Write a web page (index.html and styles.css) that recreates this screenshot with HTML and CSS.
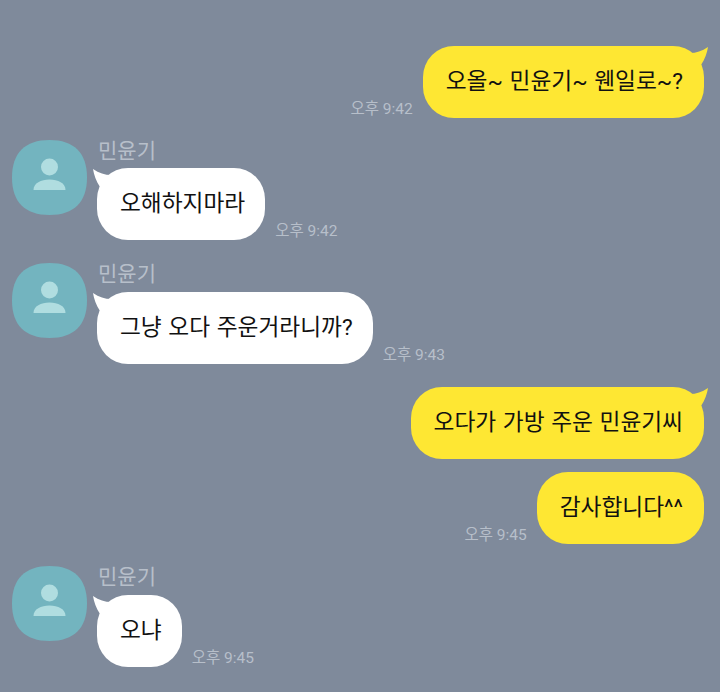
FILE: index.html
```html
<!DOCTYPE html>
<html lang="ko">
<head>
<meta charset="utf-8">
<title>채팅</title>
<link rel="stylesheet" href="styles.css">
</head>
<body>
<main class="chat">
  <div class="row me gap-22">
    <span class="time">오후 9:42</span>
    <div class="bubble yellow">오올~ 민윤기~ 웬일로~?
      <svg class="tail tail-me" viewBox="0 0 18 18"><path d="M0 6C6 6 12 4 18 0C17 6 15 12 11 18L0 18Z"/></svg>
    </div>
  </div>
  <div class="row them gap-23">
    <svg class="avatar" viewBox="0 0 75 75"><path class="av-bg" d="M37.5 0C62 0 75 13 75 37.5S62 75 37.5 75 0 62 0 37.5 13 0 37.5 0Z"/><circle class="av-fg" cx="37.5" cy="27" r="8.5"/><path class="av-fg" d="M21.5 50C21.5 43 29 39.500 37.500 39.500S53.500 43 53.500 50Z"/></svg>
    <div class="body">
      <div class="name">민윤기</div>
      <div class="line">
        <div class="bubble white">오해하지마라
          <svg class="tail tail-them" viewBox="0 0 18 18"><path d="M18 6C12 6 6 4 0 0C1 6 3 12 7 18L18 18Z"/></svg>
        </div>
        <span class="time">오후 9:42</span>
      </div>
    </div>
  </div>
  <div class="row them gap-23">
    <svg class="avatar" viewBox="0 0 75 75"><path class="av-bg" d="M37.5 0C62 0 75 13 75 37.5S62 75 37.5 75 0 62 0 37.5 13 0 37.5 0Z"/><circle class="av-fg" cx="37.5" cy="27" r="8.5"/><path class="av-fg" d="M21.5 50C21.5 43 29 39.500 37.500 39.500S53.500 43 53.500 50Z"/></svg>
    <div class="body">
      <div class="name">민윤기</div>
      <div class="line">
        <div class="bubble white">그냥 오다 주운거라니까?
          <svg class="tail tail-them" viewBox="0 0 18 18"><path d="M18 6C12 6 6 4 0 0C1 6 3 12 7 18L18 18Z"/></svg>
        </div>
        <span class="time">오후 9:43</span>
      </div>
    </div>
  </div>
  <div class="row me gap-13">
    <div class="bubble yellow">오다가 가방 주운 민윤기씨
      <svg class="tail tail-me" viewBox="0 0 18 18"><path d="M0 6C6 6 12 4 18 0C17 6 15 12 11 18L0 18Z"/></svg>
    </div>
  </div>
  <div class="row me gap-22-wide">
    <span class="time">오후 9:45</span>
    <div class="bubble yellow">감사합니다^^</div>
  </div>
  <div class="row them">
    <svg class="avatar" viewBox="0 0 75 75"><path class="av-bg" d="M37.5 0C62 0 75 13 75 37.5S62 75 37.5 75 0 62 0 37.5 13 0 37.5 0Z"/><circle class="av-fg" cx="37.5" cy="27" r="8.5"/><path class="av-fg" d="M21.5 50C21.5 43 29 39.500 37.500 39.500S53.500 43 53.500 50Z"/></svg>
    <div class="body">
      <div class="name">민윤기</div>
      <div class="line">
        <div class="bubble white">오냐
          <svg class="tail tail-them" viewBox="0 0 18 18"><path d="M18 6C12 6 6 4 0 0C1 6 3 12 7 18L18 18Z"/></svg>
        </div>
        <span class="time">오후 9:45</span>
      </div>
    </div>
  </div>
</main>
</body>
</html>
```
FILE: styles.css
```css
* { box-sizing: border-box; }
html, body { margin: 0; height: 100%; }
body {
  background: #7f8a9b;
  font-family: Roboto, "Noto Sans CJK KR", "Noto Sans", sans-serif;
  overflow: hidden;
}
.chat { display: flex; flex-direction: column; padding: 46px 16px 0 12px; }
.row { display: flex; }
.gap-22 { margin-bottom: 22px; }
.gap-22-wide { margin-bottom: 22.500px; }
.gap-23 { margin-bottom: 23px; }
.gap-13 { margin-bottom: 13px; }
.row.me { justify-content: flex-end; align-items: flex-end; gap: 10px; }
.row.them { gap: 10px; }
.avatar { width: 75px; height: 75px; flex: none; }
.av-bg { fill: #73b4bf; }
.av-fg { fill: #b0dde0; }
.body { display: flex; flex-direction: column; }
.name { height: 28.400px; padding-left: 1px; font-size: 21px; line-height: 23px; color: #b7bfca; }
.line { display: flex; align-items: flex-end; gap: 10px; }
.bubble {
  position: relative;
  height: 72px;
  border-radius: 31px;
  font-size: 22.700px;
  word-spacing: 1px;
  line-height: 71px;
  color: #111;
  white-space: nowrap;
}
.yellow { padding: 0 21px 0 23px; background: #fee733; }
.white { padding: 0 20px 0 23px; background: #fff; }
.tail { position: absolute; top: 1px; width: 18px; height: 18px; }
.tail-me { right: -4px; fill: #fee733; }
.tail-them { left: -4px; fill: #fff; }
.time { font-size: 15.500px; line-height: 18px; color: #b7bfca; white-space: nowrap; }
```
